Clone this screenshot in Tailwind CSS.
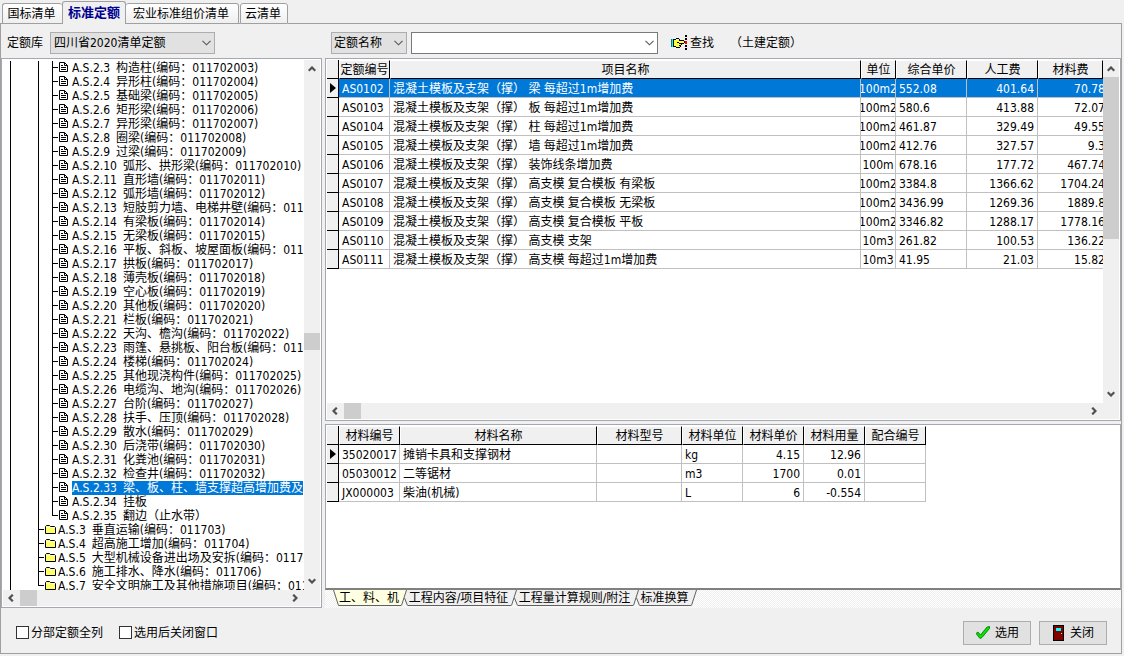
<!DOCTYPE html>
<html lang="zh-CN">
<head>
<meta charset="utf-8">
<title>标准定额</title>
<script src="https://cdn.jsdelivr.net/npm/@tailwindcss/browser@4"></script>
</head>
<body class="h-screen overflow-hidden bg-[#f0f0f0] font-['DejaVu_Sans_Condensed','Noto_Sans_CJK_SC',sans-serif] text-xs text-black">
<svg class="hidden">
  <symbol id="doc" viewBox="0 0 9 10"><path d="M.5.5h5l3 3v6h-8z" fill="#fff" stroke="#000"/><path d="M5.5.5v3h3M2 3.5h2M2 5.5h5M2 7.5h5" fill="none" stroke="#000"/></symbol>
  <symbol id="folder" viewBox="0 0 11 9"><path d="M.5 8.5v-7l1-1h3l1 1h4l1 1v6z" fill="#ffff66" stroke="#000"/><path d="M1 2.5h9" stroke="#ffffcc"/></symbol>
  <symbol id="up" viewBox="0 0 8 6"><path d="M.7 4.8 4 1.5l3.3 3.3" fill="none" stroke="#505050" stroke-width="2.2"/></symbol>
  <symbol id="down" viewBox="0 0 8 6"><path d="M.7 1.2 4 4.5l3.3-3.3" fill="none" stroke="#505050" stroke-width="2.2"/></symbol>
  <symbol id="left" viewBox="0 0 6 8"><path d="M4.8.7 1.5 4l3.3 3.3" fill="none" stroke="#505050" stroke-width="2.2"/></symbol>
  <symbol id="right" viewBox="0 0 6 8"><path d="M1.2.7 4.5 4 1.2 7.3" fill="none" stroke="#505050" stroke-width="2.2"/></symbol>
  <symbol id="chev" viewBox="0 0 9 6"><path d="M.5.8l4 4 4-4" fill="none" stroke="#555" stroke-width="1.1"/></symbol>
</svg>
<div class="flex h-full flex-col pr-[2px] pb-[2px]">
  <nav class="flex h-6 shrink-0 items-end" role="tablist">
    <div class="h-full w-[2px] shrink-0 border-b border-[#a0a0a0]"></div>
    <button role="tab" class="h-[21px] w-[60px] shrink-0 rounded-t-[3px] border border-r-0 border-[#a0a0a0] bg-linear-to-b from-white to-[#efefef] pr-[2px] leading-5">国标清单</button>
    <button role="tab" aria-selected="true" class="h-[23px] w-16 shrink-0 rounded-t-[3px] border border-b-0 border-[#a0a0a0] bg-[#f0f0f0] text-[13px] leading-5 font-bold text-[#000090]">标准定额</button>
    <button role="tab" class="h-[21px] w-[113px] shrink-0 rounded-t-[3px] border border-l-0 border-[#a0a0a0] bg-linear-to-b from-white to-[#efefef] pr-[2px] leading-5">宏业标准组价清单</button>
    <div class="h-full w-px shrink-0 border-b border-[#a0a0a0]"></div>
    <button role="tab" class="h-[21px] w-12 shrink-0 rounded-t-[3px] border border-[#a0a0a0] bg-linear-to-b from-white to-[#efefef] pr-[2px] leading-5">云清单</button>
    <div class="h-full flex-1 border-b border-[#a0a0a0]"></div>
  </nav>
  <main class="flex min-h-0 flex-1 flex-col border border-t-0 border-[#a0a0a0]">
    <div class="flex h-[34px] shrink-0 items-center pt-[3px] pl-[6px]">
      <label for="lib" class="w-[43px]">定额库</label>
      <div class="relative mr-[116px] h-[22px] w-[165px]">
        <select id="lib" class="h-full w-full appearance-none border border-[#adadad] bg-[#e1e1e1] pl-[3px] text-xs leading-5"><option>四川省2020清单定额</option></select>
        <svg class="pointer-events-none absolute top-2 right-1 h-[6px] w-[9px]"><use href="#chev"/></svg>
      </div>
      <div class="relative mr-1 h-[22px] w-[76px]">
        <select aria-label="查找字段" class="h-full w-full appearance-none border border-[#adadad] bg-[#e1e1e1] pl-[2px] text-xs leading-5"><option>定额名称</option></select>
        <svg class="pointer-events-none absolute top-2 right-1 h-[6px] w-[9px]"><use href="#chev"/></svg>
      </div>
      <div class="relative h-[22px] w-[247px]">
        <input type="text" aria-label="查找内容" class="h-full w-full border border-[#7a7a7a] bg-white px-1">
        <svg class="pointer-events-none absolute top-2 right-1 h-[6px] w-[9px]"><use href="#chev"/></svg>
      </div>
      <button class="ml-[13px] flex items-center gap-[2px]">
        <svg class="h-4 w-[17px]" viewBox="0 0 17 16" shape-rendering="crispEdges">
          <path d="M0 4h2v8h-2z" fill="#00ffff"/><path d="M0 4h1v8h-1z" fill="#008080"/>
          <path d="M3 5h10v3h-3v4h-6l-1-1z" fill="#ffff40"/>
          <path d="M2 4h1v8h-1zM3 4h2v1h-2zM5 3h3v1h-3zM8 4h1v1h-1zM8 5h5v1h-5zM13 6h1v2h-1zM8 8h5v1h-5zM6 7h2v1h-2zM10 9h1v1h-1zM8 10h2v1h-2zM9 11h1v1h-1zM5 12h4v1h-4zM3 11h2v1h-2z"/>
          <path d="M14 0h2v2h-2zM14 3h2v2h-2zM14 10h2v2h-2zM14 13h2v2h-2z"/><path d="M14 6h2v3h-2z" fill="#ff0000"/>
        </svg>查找
      </button>
      <span class="ml-4">（土建定额）</span>
    </div>

    <div class="flex min-h-0 flex-1 gap-[3px]">
      <section class="flex w-[321px] shrink-0 flex-col border border-[#a5a8b0] bg-white p-px">
        <div class="flex min-h-0 flex-1">
          <ul id="tree" role="tree" class="min-w-0 flex-1 overflow-hidden pt-px"></ul>
          <div class="flex w-4 shrink-0 flex-col items-center bg-[#f0f0f0]">
            <svg class="mt-[6px] h-[6px] w-2 shrink-0"><use href="#up"/></svg>
            <div class="flex-[261]"></div><div class="h-[17px] w-full shrink-0 bg-[#cdcdcd]"></div><div class="flex-[228]"></div>
            <svg class="mb-[6px] h-[6px] w-2 shrink-0"><use href="#down"/></svg>
          </div>
        </div>
        <div class="flex h-4 shrink-0 items-center bg-[#f0f0f0] pr-[22px] pl-[5px]">
          <svg class="mr-[6px] h-2 w-[6px]"><use href="#left"/></svg><div class="h-full w-[17px] bg-[#cdcdcd]"></div>
          <svg class="ml-auto h-2 w-[6px]"><use href="#right"/></svg>
        </div>
      </section>

      <div class="flex min-w-0 flex-1 flex-col">
        <section class="mb-[3px] flex min-h-0 flex-1 flex-col border border-[#a5a8b0] bg-white p-px">
          <div class="flex min-h-0 flex-1">
            <div class="min-w-0 flex-1 overflow-hidden">
              <table class="w-full table-fixed border-separate border-spacing-0">
                <colgroup><col class="w-3"><col class="w-[51px]"><col><col class="w-[35px]"><col class="w-[71px]"><col class="w-[71px]"><col class="w-[65px]"></colgroup>
                <thead id="qhead"></thead><tbody id="quota"></tbody>
              </table>
            </div>
            <div class="flex w-4 shrink-0 flex-col items-center bg-[#f0f0f0]">
              <svg class="mt-[6px] mb-[5px] h-[6px] w-2 shrink-0"><use href="#up"/></svg>
              <div class="h-[162px] w-full shrink-0 bg-[#cdcdcd]"></div>
              <svg class="mt-auto mb-[6px] h-[6px] w-2 shrink-0"><use href="#down"/></svg>
            </div>
          </div>
          <div class="flex h-4 shrink-0 items-center bg-[#f0f0f0] pr-[22px] pl-[5px]">
            <svg class="mr-[6px] h-2 w-[6px]"><use href="#left"/></svg><div class="h-full w-[17px] bg-[#cdcdcd]"></div>
            <svg class="ml-auto h-2 w-[6px]"><use href="#right"/></svg>
          </div>
        </section>

        <section class="h-[166px] shrink-0 overflow-hidden border border-b-2 border-[#a5a8b0] border-b-[#808080] bg-white p-px">
          <table class="w-[599px] table-fixed border-separate border-spacing-0">
            <colgroup><col class="w-3"><col class="w-[61px]"><col class="w-[197px]"><col class="w-[85px]"><col class="w-[61px]"><col class="w-[61px]"><col class="w-[61px]"><col class="w-[61px]"></colgroup>
            <thead id="mhead"></thead><tbody id="material"></tbody>
          </table>
        </section>
        <div role="tablist" class="flex h-[18px] shrink-0 bg-[repeating-conic-gradient(#ffffff_0_25%,#f0f0f0_0_50%)] bg-[length:2px_2px] pl-2">
          <svg class="h-4 w-[6px] shrink-0" viewBox="0 0 6 16"><path d="M0 0h6v16h-1z" fill="#ffffe1"/><path d="M.5 0l5 15.5h.5" fill="none" stroke="#606060"/></svg>
          <button role="tab" aria-selected="true" class="h-4 w-[62px] border-b border-[#606060] bg-[#ffffe1] pr-[2px] leading-4">工、料、机</button>
          <svg class="h-4 w-[7px] shrink-0" viewBox="0 0 7 16"><path d="M5 0h2v16h-1l-3-8z" fill="#f0f0f0"/><path d="M0 0h5.5l-5 16h-.5z" fill="#ffffe1"/><path d="M5.5 0l-5 15.5M3.5 8l3 7.5" fill="none" stroke="#606060"/></svg>
          <button role="tab" class="h-4 w-[103px] border-b border-[#606060] bg-[#f0f0f0] pr-[2px] leading-4">工程内容/项目特征</button>
          <svg class="h-4 w-[7px] shrink-0" viewBox="0 0 7 16"><path d="M0 0h7v16h-1l-3-8-3 8z" fill="#f0f0f0"/><path d="M5.5 0l-5 15.5M3.5 8l3 7.5" fill="none" stroke="#606060"/></svg>
          <button role="tab" class="h-4 w-[115px] border-b border-[#606060] bg-[#f0f0f0] pr-[2px] leading-4">工程量计算规则/附注</button>
          <svg class="h-4 w-[7px] shrink-0" viewBox="0 0 7 16"><path d="M0 0h7v16h-1l-3-8-3 8z" fill="#f0f0f0"/><path d="M5.5 0l-5 15.5M3.5 8l3 7.5" fill="none" stroke="#606060"/></svg>
          <button role="tab" class="h-4 w-[51px] border-b border-[#606060] bg-[#f0f0f0] pr-[2px] leading-4">标准换算</button>
          <svg class="h-4 w-[6px] shrink-0" viewBox="0 0 6 16"><path d="M0 0h5.5l-5 16h-.5z" fill="#f0f0f0"/><path d="M5.5 0l-5 15.5" stroke="#606060"/></svg>
        </div>
      </div>
    </div>

    <footer class="flex h-[45px] shrink-0 items-center pt-1 pr-[14px] pl-[15px]">
      <label class="mr-4 flex items-center gap-[2px]"><input type="checkbox" class="size-[13px] appearance-none border border-[#333] bg-white">分部定额全列</label>
      <label class="flex items-center gap-[2px]"><input type="checkbox" class="size-[13px] appearance-none border border-[#333] bg-white">选用后关闭窗口</label>
      <button class="mr-2 ml-auto flex h-6 w-[68px] items-center border border-[#adadad] bg-[#e1e1e1] pl-3">
        <svg class="mr-[5px] h-[13px] w-[14px]" viewBox="0 0 14 13"><path d="M0 7.5 2 6l2.500 3L11 1l2.500-.5v2L6 11.500l-2 1z" fill="#00e600" stroke="#007000" stroke-width=".8"/></svg>选用</button>
      <button class="flex h-6 w-[68px] items-center border border-[#adadad] bg-[#e1e1e1] pl-[13px]">
        <svg class="mr-[6px] h-4 w-[11px]" viewBox="0 0 11 16" shape-rendering="crispEdges"><path d="M0 0h11v16h-11z"/><path d="M1 1h9v14h-9z" fill="#800000"/><path d="M3 3h5v3h-5z" fill="#00ffff"/><path d="M8 8h1v1h-1z" fill="#ffff00"/></svg>关闭</button>
    </footer>
  </main>
</div>
<script>
const leaves = ["构造柱","异形柱","基础梁","矩形梁","异形梁","圈梁","过梁","弧形、拱形梁","直形墙","弧形墙","短肢剪力墙、电梯井壁","有梁板","无梁板","平板、斜板、坡屋面板","拱板","薄壳板","空心板","其他板","栏板","天沟、檐沟","雨篷、悬挑板、阳台板","楼梯","其他现浇构件","电缆沟、地沟","台阶","扶手、压顶","散水","后浇带","化粪池","检查井"];
const rows = leaves.map((t, i) => [`A.S.2.${i + 3}`, `${t}(编码：0117020${String(i + 3).padStart(2, "0")})`]);
rows.push(["A.S.2.33", "梁、板、柱、墙支撑超高增加费及"], ["A.S.2.34", "挂板"], ["A.S.2.35", "翻边（止水带）"]);
const folders = [["A.S.3", "垂直运输(编码：011703)"], ["A.S.4", "超高施工增加(编码：011704)"], ["A.S.5", "大型机械设备进出场及安拆(编码：011705)"], ["A.S.6", "施工排水、降水(编码：011706)"], ["A.S.7", "安全文明施工及其他措施项目(编码：011707)"]];
const branch = last => `<svg class="h-[14px] w-[6px] shrink-0" viewBox="0 0 6 14"><path d="M.5 0v${last ? 7 : 14}M0 6.5h6" stroke="#000"/></svg>`;
const label = ([code, name], on) => `<span class="${on ? "flex shrink-0 gap-[6px] bg-[#0078d7] text-white" : "flex shrink-0 gap-[6px]"}"><span>${code}</span><span>${name}</span></span>`;
document.getElementById("tree").innerHTML =
  rows.map((t, i) => `<li role="treeitem" class="flex h-[14px] pl-[7px] leading-[14px] whitespace-nowrap"><span class="w-7 shrink-0 border-l border-black"></span><span class="w-[14px] shrink-0 border-l border-black"></span>${branch(i === 32)}<svg class="mt-px mr-1 ml-px h-[10px] w-[9px] shrink-0"><use href="#doc"/></svg>${label(t, i === 30)}</li>`).join("") +
  folders.map((t, i) => `<li role="treeitem" class="flex h-[14px] pl-[7px] leading-[14px] whitespace-nowrap"><span class="w-7 shrink-0 border-l border-black"></span>${branch(i === 4)}<svg class="mt-[2px] mr-[2px] ml-px h-[9px] w-[11px] shrink-0"><use href="#folder"/></svg>${label(t, false)}</li>`).join("");

const head = cols => `<tr><th class="h-[19px] border-r border-b border-black bg-[#f0f0f0] p-0"></th>` + cols.map(c => `<th class="h-[19px] border-t border-r border-b border-l border-t-white border-r-black border-b-black border-l-white bg-[#f0f0f0] p-0 leading-[18px] font-normal whitespace-nowrap"><div class="flex h-[17px] justify-center overflow-hidden">${c}</div></th>`).join("") + `</tr>`;
const mark = `<svg class="ml-[3px] h-[10px] w-[6px]" viewBox="0 0 6 10"><path d="M0 0l6 5-6 5z"/></svg>`;
const kinds = { l: "flex h-[18px] overflow-hidden pl-[3px]", c: "flex h-[18px] justify-center overflow-hidden", r: "flex h-[18px] justify-end overflow-hidden pr-[3px]", x: "flex h-[18px] justify-end overflow-hidden -mr-[2px]" };
const body = (data, align, hot) => data.map((r, n) => `<tr class="${hot && n === 0 ? "bg-[#0078d7] text-white" : ""}"><td class="h-[19px] border-r border-b border-black bg-[#f0f0f0] p-0 text-black">${n === 0 ? mark : ""}</td>` + r.map((c, i) => `<td class="${align[i] === "x" ? "h-[19px] border-b border-[#c0c0c0] p-0 leading-5 whitespace-nowrap" : "h-[19px] border-r border-b border-[#c0c0c0] p-0 leading-5 whitespace-nowrap"}"><div class="${kinds[align[i]]}">${c}</div></td>`).join("") + `</tr>`).join("");
const p = "混凝土模板及支架（撑） ";
qhead.innerHTML = head(["定额编号", "项目名称", "单位", "综合单价", "人工费", "材料费"]);
quota.innerHTML = body([
  ["AS0102", p + "梁 每超过1m增加费", "100m2", "552.08", "401.64", "70.78"],
  ["AS0103", p + "板 每超过1m增加费", "100m2", "580.6", "413.88", "72.07"],
  ["AS0104", p + "柱 每超过1m增加费", "100m2", "461.87", "329.49", "49.55"],
  ["AS0105", p + "墙 每超过1m增加费", "100m2", "412.76", "327.57", "9.3"],
  ["AS0106", p + "装饰线条增加费", "100m", "678.16", "177.72", "467.74"],
  ["AS0107", p + "高支模 复合模板 有梁板", "100m2", "3384.8", "1366.62", "1704.24"],
  ["AS0108", p + "高支模 复合模板 无梁板", "100m2", "3436.99", "1269.36", "1889.8"],
  ["AS0109", p + "高支模 复合模板 平板", "100m2", "3346.82", "1288.17", "1778.16"],
  ["AS0110", p + "高支模 支架", "10m3", "261.82", "100.53", "136.22"],
  ["AS0111", p + "高支模 每超过1m增加费", "10m3", "41.95", "21.03", "15.82"]
], "llclrx", true);
mhead.innerHTML = head(["材料编号", "材料名称", "材料型号", "材料单位", "材料单价", "材料用量", "配合编号"]);
material.innerHTML = body([
  ["35020017", "摊销卡具和支撑钢材", "", "kg", "4.15", "12.96", ""],
  ["05030012", "二等锯材", "", "m3", "1700", "0.01", ""],
  ["JX000003", "柴油(机械)", "", "L", "6", "-0.554", ""]
], "llllrrl", false);
</script>
</body>
</html>
